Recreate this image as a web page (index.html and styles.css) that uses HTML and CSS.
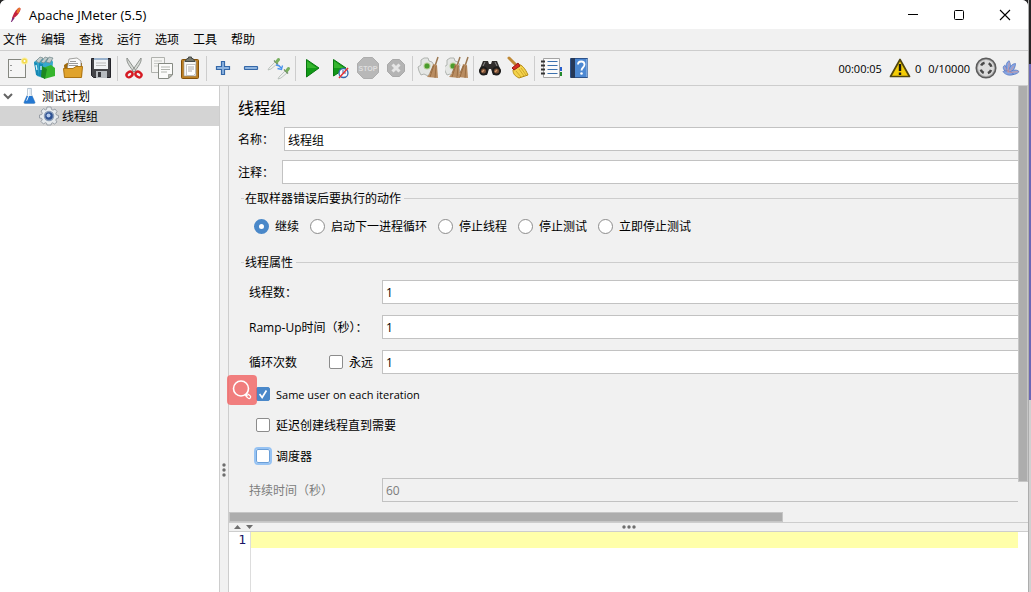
FILE: index.html
```html
<!DOCTYPE html>
<html lang="zh-CN">
<head>
<meta charset="utf-8">
<title>Apache JMeter (5.5)</title>
<link rel="stylesheet" href="styles.css">
</head>
<body>
<div class="window">
  <header class="titlebar">
    <svg class="feather" viewBox="0 0 14 18"><path d="M3 14C4 10 6 5 10 2c2-1 3 0 2 3-2 4-4 6-7 8z" fill="#c4213f"/><path d="M9 3c2-2 4-2 3 1l-2 4-2-1z" fill="#e8772e"/><path d="M2 17l2-5 2 1-3 4z" fill="#7c2a78"/></svg>
    <h1 class="title">Apache JMeter (5.5)</h1>
    <button class="winbtn" aria-label="最小化"><svg viewBox="0 0 12 12"><path d="M1 5.500h10" stroke="#000"/></svg></button>
    <button class="winbtn" aria-label="最大化"><svg viewBox="0 0 12 12"><rect x="1.500" y="1.500" width="9" height="9" rx="1" fill="none" stroke="#000"/></svg></button>
    <button class="winbtn" aria-label="关闭"><svg viewBox="0 0 12 12"><path d="M1 1l10 10M11 1L1 11" stroke="#000" stroke-width="1.100"/></svg></button>
  </header>
  <nav class="menubar">
    <button>文件</button><button>编辑</button><button>查找</button><button>运行</button><button>选项</button><button>工具</button><button>帮助</button>
  </nav>
  <div class="toolbar">
    <button aria-label="新建"><svg viewBox="0 0 24 24"><rect x="3.500" y="3.500" width="17" height="18" fill="#f5f5f5" stroke="#858780"/><path d="M6 9v1M6 14v1" stroke="#777" stroke-width="1.500"/><circle cx="19.500" cy="5" r="3.500" fill="#fbef9c"/><circle cx="19.500" cy="5" r="2.500" fill="#f3d94a"/><circle cx="19.500" cy="5" r="1" fill="#fff"/></svg></button>
    <button aria-label="模板"><svg viewBox="0 0 24 24"><path d="M1 6l4-3 13-1 2 4-1 11-9 5-6-2z" fill="#37a9cb"/><path d="M3 5l4-4 3 1-4 5zM8 6l4-5 3 1-4 5zM13 6l3-5 4 1-3 5z" fill="#c3cccc" stroke="#6f8588" stroke-width=".7"/><path d="M1 6l3 1 2 13-3-1zM6 7l4 1v13l-4-1z" fill="#1689b5"/><path d="M10 12l8-3 4 3v8l-11 3z" fill="#36b52d"/><path d="M9 10l5 3-2 10-4-2z" fill="#1c8820"/><path d="M3 9l1 5M8 10v4" stroke="#d5f2fa" stroke-width="1.300"/></svg></button>
    <button aria-label="打开"><svg viewBox="0 0 24 24"><path d="M3 9l3-2h15v13l-2 2H4z" fill="#a16a0b"/><path d="M8 3l8-1 4 3v9H6z" fill="#fafafa" stroke="#8c8c88" stroke-width=".8"/><path d="M9 5.500h6M8 7.500h9M8 9.500h9" stroke="#9a9a9a"/><path d="M2.500 12.500H12l3-2h6.500l-1 11h-17z" fill="#e0a32c" stroke="#ad7412"/></svg></button>
    <button aria-label="保存"><svg viewBox="0 0 24 24"><path d="M2.500 2.500h19v19h-17l-2-2z" fill="#454549" stroke="#232329"/><path d="M5 2h14v11H5z" fill="#f1f3f5"/><path d="M5 2h14v2H5z" fill="#9ab3ce"/><path d="M7 7h10M7 9.500h10" stroke="#bbb"/><path d="M7 15h11v7H7z" fill="#b8bcc0"/><path d="M9 16h3v5H9z" fill="#37373c"/></svg></button>
    <span class="sep"></span>
    <button aria-label="剪切"><svg viewBox="0 0 24 24"><path d="M5 2l9 13-2 1C8 11 4 6 5 2zM19 2l-9 13 2 1c4-5 8-10 7-14z" fill="#d7dad6" stroke="#858984" stroke-width=".9"/><ellipse cx="7.500" cy="18.500" rx="3.200" ry="2.500" transform="rotate(-35 7.500 18.500)" fill="none" stroke="#d51b23" stroke-width="2.400"/><ellipse cx="16.500" cy="18.500" rx="3.200" ry="2.500" transform="rotate(35 16.500 18.500)" fill="none" stroke="#d51b23" stroke-width="2.400"/></svg></button>
    <button aria-label="复制"><svg viewBox="0 0 24 24"><path d="M1.500 1.500h13v15h-13z" fill="#f4f4f2" stroke="#b0b2ae"/><path d="M4 5h8M4 7.500h8M4 10h5" stroke="#c7c9c5"/><path d="M8.500 7.500h14V19l-4 3.500h-10z" fill="#fbfbfa" stroke="#868a83"/><path d="M11 11h9M11 13.500h9M11 16h6" stroke="#b1b4ae"/><path d="M18.500 22v-3.500h4z" fill="#babdb6" stroke="#868a83" stroke-width=".7"/></svg></button>
    <button aria-label="粘贴"><svg viewBox="0 0 24 24"><rect x="3.500" y="3.500" width="17" height="19" rx="1" fill="#bd7f23" stroke="#835008"/><path d="M6 5h12v15H6z" fill="#f7f7f5" stroke="#999" stroke-width=".6"/><path d="M7 5.500l2-3h1.500V1h3v1.500H15l2 3z" fill="#77796f" stroke="#474b46"/><path d="M8.500 8.500h9v9l-2 2h-7z" fill="#fff" stroke="#aaa" stroke-width=".7"/><path d="M10 11h6M10 13h6M10 15h4" stroke="#aaa"/></svg></button>
    <span class="sep"></span>
    <button aria-label="展开"><svg viewBox="0 0 24 24"><path d="M10.500 5.500h3v5h5v3h-5v5h-3v-5h-5v-3h5z" fill="#8eb4df" stroke="#3568a8" stroke-width="1.200"/></svg></button>
    <button aria-label="折叠"><svg viewBox="0 0 24 24"><rect x="5.500" y="10.500" width="13" height="3" rx=".5" fill="#8eb4df" stroke="#3568a8" stroke-width="1.200"/></svg></button>
    <button aria-label="切换"><svg viewBox="0 0 24 24"><g id="dropper"><path d="M2 12l6-6 2 2-6 5-3 1z" fill="#edf0ee" stroke="#b3bab5" stroke-width=".8"/><path d="M7 4.500l4 4" stroke="#6a8a60" stroke-width="1.200"/><path d="M10 5.500l1.500-2" stroke="#78b05f" stroke-width="3" stroke-linecap="round"/></g><use href="#dropper" x="10" y="9"/><path d="M9 9c3 0 4 1 5 3M15.500 9.500l-1 4-4-1" fill="none" stroke="#4b93ee" stroke-width="1.300"/></svg></button>
    <span class="sep"></span>
    <button aria-label="启动"><svg viewBox="0 0 24 24"><path d="M6.500 3.500L19 12 6.500 21z" fill="#119a16" stroke="#087810"/><path d="M7 5l10 7H7z" fill="#36b52e"/></svg></button>
    <button aria-label="不停顿启动"><svg viewBox="0 0 24 24"><path d="M5.500 3.500L18 12 5.500 20z" fill="#129719" stroke="#087810"/><path d="M6 5l10 7H6z" fill="#36b52e"/><circle cx="15.500" cy="17" r="4.500" fill="#f5f8ff" stroke="#3466ab" stroke-width="1.300"/><path d="M15 14v3h3" fill="none" stroke="#3b67a4"/><path d="M11 22l9-10" stroke="#e83235" stroke-width="1.500"/></svg></button>
    <button aria-label="停止" disabled><svg viewBox="0 0 24 24"><path d="M7.500 1.500h9l6 6v9l-6 6h-9l-6-6v-9z" fill="#b8b8b8" stroke="#adadad"/><text x="12" y="15" class="stoptext">STOP</text></svg></button>
    <button aria-label="关闭测试" disabled><svg viewBox="0 0 24 24"><path d="M8.500 3.500h7l5 5v7l-5 5h-7l-5-5v-7z" fill="#b4b4b4" stroke="#a9a9a9"/><path d="M8.500 8.500l7 7M15.500 8.500l-7 7" stroke="#e6e6e6" stroke-width="3"/></svg></button>
    <span class="sep"></span>
    <button aria-label="清除"><svg viewBox="0 0 24 24"><g id="sweep"><path d="M7 2h4l1 3 3 1 2 3-1 3 1 4-4 1-2 3-4-2-3 1-2-4-1-4 3-2V4z" fill="#e4e6e4" stroke="#afb3af"/><circle cx="10" cy="10" r="3.500" fill="#b6cf95"/><circle cx="10" cy="10" r="2.500" fill="#4a9c2c"/></g><g id="broom"><path d="M21 1l-3 9" stroke="#9a7650" stroke-width="1.500"/><path d="M16 8l4 1 1 13-11-1c3-3 5-8 6-13z" fill="#b98d62"/><path d="M17 9l-4 12M19 10l-1 12M16 10l-3 7" stroke="#8c6238" stroke-width=".7"/></g></svg></button>
    <button aria-label="清除全部"><svg viewBox="0 0 24 24"><use href="#sweep" x="-2"/><use href="#broom" x="-6"/><use href="#broom" x="2"/></svg></button>
    <span class="sep"></span>
    <button aria-label="搜索"><svg viewBox="0 0 24 24"><path d="M5 5h5l1 3h2l1-3h5l4 10-3 4h-5l-2-6h-2l-2 6H4l-3-4z" fill="#302d2c"/><circle cx="5.500" cy="15" r="3.500" fill="#7a5137" stroke="#1b1b1b" stroke-width="2"/><circle cx="18.500" cy="15" r="3.500" fill="#7a5137" stroke="#1b1b1b" stroke-width="2"/><path d="M4 16l2-2M17 16l2-2" stroke="#d29a70" stroke-width="1.500"/><path d="M7 6l-2 4M17 6l2 4" stroke="#8d8d8d"/></svg></button>
    <button aria-label="重置搜索"><svg viewBox="0 0 24 24"><path d="M3 2l7 7" stroke="#c08a35" stroke-width="3" stroke-linecap="round"/><path d="M12 8c4 1 7 4 10 11l-9 3c-4-2-6-4-6-8z" fill="#f4d34b" stroke="#b58b13"/><path d="M10 15l5 6M13 13l5 7M15 12l5 7" stroke="#cfa92d"/><path d="M6 12l6-5 2 3-6 4z" fill="#d72d21" stroke="#971c16"/></svg></button>
    <span class="sep"></span>
    <button aria-label="函数助手"><svg viewBox="0 0 24 24"><path d="M21 11h2v4h-2z" fill="#265dcc"/><path d="M21 16h2v4h-2z" fill="#21882b"/><path d="M4.500 2.500h16v19h-16z" fill="#fafafa" stroke="#a4a4a4"/><path d="M8.500 5.500h10M8.500 9.500h10M8.500 13.500h10M8.500 17.500h10" stroke="#3b70ad"/><path d="M2 5.500h4M2 9.500h4M2 13.500h4M2 17.500h4" stroke="#333" stroke-width="2"/></svg></button>
    <button aria-label="帮助"><svg viewBox="0 0 24 24"><path d="M3.500 2.500h17v19h-17z" fill="#4c88d2" stroke="#2c528b"/><path d="M4 2h4v20H4z" fill="#263857"/><path d="M20 3v18" stroke="#a9c6ea"/><path d="M11 8.500c0-4 6.500-4 6.500 0 0 3-3 3-3 6" fill="none" stroke="#fff" stroke-width="1.800"/><circle cx="14.500" cy="17.500" r="1.300" fill="#fff"/></svg></button>
    <div class="status">
      <span>00:00:05</span>
      <svg class="warn" viewBox="0 0 22 20"><path d="M11 1.500L20.500 18.500H1.500z" fill="#f4cd05" stroke="#51460d" stroke-width="1.700" stroke-linejoin="round"/><path d="M11 6v7M11 14.500v2.500" stroke="#161616" stroke-width="2.400"/></svg>
      <span>0</span><span class="count">0/10000</span>
      <svg class="gauge" viewBox="0 0 22 22"><circle cx="11" cy="11" r="9.800" fill="#aaa" stroke="#5c5c5c" stroke-width="1.500"/><circle cx="11" cy="11" r="8" fill="#dcdcdc"/><circle cx="11" cy="11" r="5.500" fill="none" stroke="#484848" stroke-width="2.500" stroke-dasharray="4.300 4.339" stroke-dashoffset="-2.170"/></svg>
      <svg class="logo" viewBox="0 0 20 18"><g fill="#86a5e2" stroke="#4869bb" stroke-width=".7"><path d="M5 14C0 10 1 7 3 6c3 2 4 5 4 8z"/><path d="M6 14C3 7 5 2 8 1c2 4 2 9 0 13z"/><path d="M7 14c0-5 4-10 8-10 0 5-3 9-7 11z"/><path d="M8 15c2-4 8-5 11-2-2 3-7 4-11 3z"/><path d="M1 13c4-2 9 0 12 3-4 2-9 1-12-3z"/></g><path d="M3 8l4 6 1-11M8 14l5-7M9 14l9-1" fill="none" stroke="#e0988e" stroke-width=".8"/></svg>
    </div>
  </div>
  <main class="workspace">
    <aside class="tree">
      <div class="node root"><svg class="chevron" viewBox="0 0 10 7"><path d="M1 1l4 4 4-4" fill="none" stroke="#646464" stroke-width="2"/></svg><svg class="flask" viewBox="0 0 18 18"><path d="M7 1h4v6l4 9q0 1-1 1H4q-1 0-1-1l4-9z" fill="#e5eef6" stroke="#a2b3c3" stroke-width=".8"/><path d="M6 9h6l3 7-1 1H4l-1-1z" fill="#2578d1"/><path d="M8 2v7l-2 5" stroke="#fff" fill="none"/></svg><span>测试计划</span></div>
      <div class="node child"><svg class="gear" viewBox="0 0 20 20"><path d="M8 1h4l.5 2.500 1.500.6L16 3l2 2.500-1.200 2 .7 1.500 2 .5v2.500l-2 .6-.7 1.500L18 16l-2.500 2-2-1.200-1 .5L12 19H8l-.5-1.800-1.200-.5L4.500 18 2 15.500l1.200-1.800-.6-1.400L.5 12V9l2.200-.5.6-1.300L2 5l2.500-2.300 2 1.200 1-.5z" fill="#e6eaed" stroke="#9298a0" stroke-width=".9"/><circle cx="10" cy="10" r="4.500" fill="#2d5193" stroke="#8a9db8" stroke-width="1.500"/><circle cx="9.500" cy="9.500" r="2" fill="#b5cbed"/></svg><span>线程组</span></div>
    </aside>
    <div class="divider-v"><svg viewBox="0 0 4 14"><circle cx="2" cy="2" r="1.700"/><circle cx="2" cy="7" r="1.700"/><circle cx="2" cy="12" r="1.700"/></svg></div>
    <section class="right">
      <div class="upper">
        <form class="form">
          <h2 class="heading">线程组</h2>
          <div class="field name"><label for="name">名称：</label><input id="name" type="text" value="线程组"></div>
          <div class="field comment"><label for="comment">注释：</label><input id="comment" type="text"></div>
          <fieldset class="group actions">
            <legend>在取样器错误后要执行的动作</legend>
            <div class="radios">
              <label><input type="radio" name="act" checked><span>继续</span></label>
              <label><input type="radio" name="act"><span>启动下一进程循环</span></label>
              <label><input type="radio" name="act"><span>停止线程</span></label>
              <label><input type="radio" name="act"><span>停止测试</span></label>
              <label><input type="radio" name="act"><span>立即停止测试</span></label>
            </div>
          </fieldset>
          <fieldset class="group props">
            <legend>线程属性</legend>
            <div class="prop"><label for="threads"><span>线程数：</span></label><input id="threads" type="text" value="1"></div>
            <div class="prop"><label for="ramp"><span>Ramp-Up时间（秒）：</span></label><input id="ramp" type="text" value="1"></div>
            <div class="prop"><label for="loops"><span>循环次数</span></label><label class="forever"><input type="checkbox"><span>永远</span></label><input id="loops" type="text" value="1"></div>
            <div class="checks">
              <label><input type="checkbox" checked><span class="latin">Same user on each iteration</span></label>
              <label><input type="checkbox"><span>延迟创建线程直到需要</span></label>
              <label><input type="checkbox" class="focused"><span>调度器</span></label>
            </div>
            <div class="prop disabled"><label for="duration"><span>持续时间（秒）</span></label><input id="duration" type="text" value="60" disabled></div>
          </fieldset>
        </form>
        <div class="vscroll"><div class="thumb"></div></div>
        <div class="hscroll"><div class="thumb"></div></div>
        <button class="finder" aria-label="识图"><svg viewBox="0 0 30 30"><circle cx="14" cy="13.500" r="7.500" fill="none" stroke="#fff" stroke-width="1.600"/><path d="M18.500 19.500l2 1.500" stroke="#fff" stroke-width="1.500"/><rect x="18.500" y="19.500" width="5.500" height="3" rx="1.500" transform="rotate(40 21 21)" fill="none" stroke="#fff" stroke-width="1.200"/></svg></button>
      </div>
      <div class="divider-h">
        <svg class="arrows" viewBox="0 0 20 6"><path d="M0 5l3.500-4L7 5zM12 1h7l-3.500 4z"/></svg>
        <svg class="dots" viewBox="0 0 14 4"><circle cx="2" cy="2" r="1.700"/><circle cx="7" cy="2" r="1.700"/><circle cx="12" cy="2" r="1.700"/></svg>
      </div>
      <div class="log"><div class="gutter">1</div><div class="lines"><div class="current"></div></div></div>
    </section>
  </main>
</div>
<div class="desktop"><div class="dark"></div><div class="purple"></div></div>
</body>
</html>
```
FILE: styles.css
```css
* { box-sizing: border-box; }
body {
  margin: 0; height: 100vh; display: flex; overflow: hidden;
  font: 12px/20px "Open Sans", "Noto Sans CJK SC", sans-serif;
  color: #000; background: #252526;
}
button, input { font: inherit; color: inherit; margin: 0; }
button { border: 0; padding: 0; background: none; }
svg { display: block; flex: none; }
.window { flex: 1; min-width: 0; display: flex; flex-direction: column; background: #f1f1f1; border-radius: 6px 6px 0 0; overflow: hidden; }
.desktop { width: 3px; display: flex; flex-direction: column; background: #d0d0d0; border-left: 1px solid #adadad; }
.dark { height: 64px; background: #252526; }
.purple { height: 336px; background: #6a67b5; }

.titlebar { height: 29px; display: flex; align-items: center; background: #fff; padding-left: 9px; }
.feather { width: 13px; height: 17px; margin-right: 7px; }
.title { flex: 1; margin: 0; font-size: 13px; font-weight: 400; }
.winbtn { width: 46px; height: 28px; display: flex; align-items: center; justify-content: center; }
.winbtn svg { width: 12px; height: 12px; }

.menubar { height: 22px; display: flex; gap: 14px; padding: 1px 0 0 3px; border-bottom: 1px solid #cdcdcd; }
.toolbar { height: 35px; display: flex; align-items: center; padding-left: 3px; border-bottom: 1px solid #cdcdcd; }
.toolbar button { width: 28px; height: 28px; padding: 2px; }
.toolbar button svg { width: 24px; height: 24px; }
.sep { width: 1px; height: 25px; margin: 0 2px; background: #cdcdcd; }
.stoptext { font: 700 7px "Liberation Sans", sans-serif; fill: #dedede; text-anchor: middle; }
.status { margin-left: auto; display: flex; align-items: center; padding-right: 8px; font-size: 11px; }
.status span { padding-top: 2px; }
.warn { width: 22px; height: 20px; margin: 0 4px 0 7px; }
.count { margin-left: 7px; }
.gauge { width: 22px; height: 22px; margin: 0 5px; }
.logo { width: 18px; height: 18px; }

.workspace { flex: 1; min-height: 0; display: flex; }
.tree { width: 219px; background: #fff; }
.node { height: 20px; display: flex; align-items: center; }
.node span { padding-top: 2px; }
.root { padding-left: 3px; }
.child { padding-left: 39px; background: #d4d4d4; }
.chevron { width: 10px; height: 7px; margin-right: 8px; }
.flask { width: 17px; height: 18px; margin-right: 4px; }
.gear { width: 20px; height: 20px; margin-right: 3px; }
.divider-v { width: 10px; border: solid #cdcdcd; border-width: 0 1px; display: flex; justify-content: center; padding-top: 377px; fill: #6e6e6e; }
.divider-v svg { width: 4px; height: 14px; }
.right { flex: 1; min-width: 0; display: flex; flex-direction: column; }

.upper { position: relative; display: grid; grid-template: 1fr 10px / minmax(0, 1fr) 10px; height: 436px; }
.form { padding: 10px 0 0 9px; overflow: hidden; }
.heading { margin: 0 0 7px; font-size: 16px; line-height: 24px; font-weight: 400; }
.field { display: flex; align-items: center; margin-bottom: 9px; }
.field label { width: 44px; padding-top: 2px; white-space: nowrap; }
.name label { width: 46px; }
input[type="text"] { flex: 1; min-width: 0; height: 24px; padding: 1px 3px 0; border: 1px solid #c2c2c2; border-right: 0; border-radius: 0; background: #fff; outline: 0; }
.group { margin: 0 0 0 3px; padding: 9px 0 0; border: 0; border-top: 1px solid #cdcdcd; min-width: 0; }
.group legend { margin-left: 3px; padding: 1px 3px 0 1px; line-height: 16px; }
.actions { margin-top: -3px; }
.props { margin-top: 18px; }
.radios { display: flex; gap: 11px; padding-left: 13px; }
.radios label, .checks label, .forever { display: flex; align-items: center; gap: 6px; white-space: nowrap; }
.radios span, .checks span, .prop span { display: block; padding-top: 1px; margin-bottom: -1px; }
input[type="radio"], input[type="checkbox"] { appearance: none; flex: none; width: 14px; height: 14px; background: #fff center / 100% no-repeat; border: 1px solid #8c8c8c; border-radius: 2px; }
input[type="radio"] { width: 15px; height: 15px; border-radius: 50%; }
input[type="radio"]:checked { border: 5px solid #4a88c9; }
input[type="checkbox"]:checked { border-color: #4a88c9; background-color: #4a88c9; background-image: url('data:image/svg+xml,<svg xmlns="http://www.w3.org/2000/svg" viewBox="0 0 14 14"><path d="M3 7l3 4 5-8" fill="none" stroke="white" stroke-width="2"/></svg>'); }
.checks .focused { outline: 2px solid #97c3f3; border-color: #6b9fd8; }
.latin { font-size: 11px; }
.prop { display: flex; align-items: center; padding-left: 8px; margin-bottom: 11px; white-space: nowrap; }
.prop > label:first-child { width: 133px; }
.prop > label:first-child:has(+ .forever) { width: 80px; }
.forever { width: 53px; }
.checks { display: flex; flex-direction: column; gap: 11px; padding: 0 0 12px 15px; margin-top: -1px; }
.disabled { color: #7d7d7d; }
.disabled input[type="text"] { background: #f1f1f1; color: #7d7d7d; }
.vscroll .thumb { height: 396px; background: #adadad; border: 1px solid #c6c6c6; border-top: 0; }
.hscroll .thumb { width: 554px; max-width: 100%; height: 10px; background: #adadad; border: 1px solid #c6c6c6; }
.finder { position: absolute; left: -2px; top: 289px; width: 30px; height: 30px; border-radius: 4px; background: rgba(240, 100, 100, .82); }

.divider-h { position: relative; height: 10px; border: solid #cdcdcd; border-width: 1px 0; display: flex; align-items: center; justify-content: center; fill: #6e6e6e; }
.arrows { position: absolute; left: 5px; width: 20px; height: 6px; }
.dots { width: 14px; height: 4px; }
.log { flex: 1; display: flex; background: #fff; }
.gutter { width: 22px; padding-right: 4px; border-right: 1px solid #ddd; text-align: right; font: 13px/16px "DejaVu Sans Mono", monospace; color: #1b1464; }
.lines { flex: 1; padding-right: 10px; }
.current { height: 16px; background: #ffffaa; }
```
